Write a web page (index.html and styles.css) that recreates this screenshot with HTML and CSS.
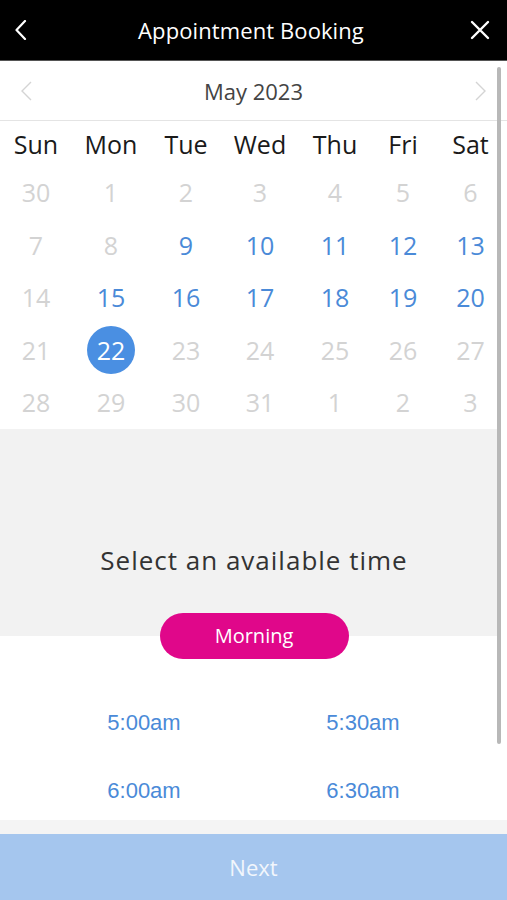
FILE: index.html
```html
<!DOCTYPE html>
<html>
<head>
<meta charset="utf-8">
<link rel="stylesheet" href="styles.css">
</head>
<body>
<div class="app">
  <header class="topbar">
    <svg class="icon" width="20" height="20" viewBox="0 0 20 20"><path d="M13 1 L4.5 10 L13 19" fill="none" stroke="#fff" stroke-width="2.2" stroke-linecap="round" stroke-linejoin="round"/></svg>
    <h1 class="title">Appointment Booking</h1>
    <svg class="icon" width="20" height="20" viewBox="0 0 20 20"><path d="M2 2 L18 18 M18 2 L2 18" fill="none" stroke="#fff" stroke-width="2.4" stroke-linecap="round"/></svg>
  </header>
  <main class="content">
    <div class="month">
      <svg width="14" height="22" viewBox="0 0 14 22"><path d="M12 2 L3 11 L12 20" fill="none" stroke="#d4d4d4" stroke-width="1.4"/></svg>
      <span class="month-name">May 2023</span>
      <svg width="14" height="22" viewBox="0 0 14 22"><path d="M2 2 L11 11 L2 20" fill="none" stroke="#d4d4d4" stroke-width="1.4"/></svg>
    </div>
    <div class="cal">
      <div class="dow">Sun</div><div class="dow">Mon</div><div class="dow">Tue</div><div class="dow">Wed</div><div class="dow">Thu</div><div class="dow">Fri</div><div class="dow">Sat</div>
      <div class="d off">30</div><div class="d off">1</div><div class="d off">2</div><div class="d off">3</div><div class="d off">4</div><div class="d off">5</div><div class="d off">6</div>
      <div class="d off">7</div><div class="d off">8</div><div class="d on">9</div><div class="d on">10</div><div class="d on">11</div><div class="d on">12</div><div class="d on">13</div>
      <div class="d off">14</div><div class="d on">15</div><div class="d on">16</div><div class="d on">17</div><div class="d on">18</div><div class="d on">19</div><div class="d on">20</div>
      <div class="d off">21</div><div class="d sel"><span class="dot">22</span></div><div class="d off">23</div><div class="d off">24</div><div class="d off">25</div><div class="d off">26</div><div class="d off">27</div>
      <div class="d off">28</div><div class="d off">29</div><div class="d off">30</div><div class="d off">31</div><div class="d off">1</div><div class="d off">2</div><div class="d off">3</div>
    </div>
    <section class="timepanel">
      <p class="prompt">Select an available time</p>
      <div class="pill">Morning</div>
    </section>
    <div class="times">
      <div class="t">5:00am</div><div class="t">5:30am</div>
      <div class="t">6:00am</div><div class="t">6:30am</div>
    </div>
    <div class="strip"></div>
    <div class="scrollbar"></div>
  </main>
  <footer class="next">Next</footer>
</div>
</body>
</html>
```
FILE: styles.css
```css
* { box-sizing: border-box; margin: 0; padding: 0; }
html, body { width: 507px; height: 900px; overflow: hidden; background: #fff; }
body { font-family: "Open Sans", "Noto Sans", sans-serif; }
.app { display: flex; flex-direction: column; height: 900px; }
.topbar {
  flex: 0 0 61px; background: #000; display: flex; align-items: center;
  justify-content: space-between; padding: 0 17px 0 12px;
  border-bottom: 1px solid #555;
}
.title { color: #fff; font-size: 22px; font-weight: 400; letter-spacing: 0.1px; }
.content { position: relative; flex: 0 0 772px; display: flex; flex-direction: column; }
.month {
  flex: 0 0 60px; display: flex; align-items: center; justify-content: space-between;
  padding: 0 19px 0 19px; border-bottom: 1px solid #e4e4e4;
}
.month-name { color: #444; font-size: 22px; }
.cal {
  flex: 0 0 auto;
  display: grid;
  grid-template-columns: 72px 78px 72px 76px 74px 62px 1fr;
  grid-template-rows: 45px repeat(5, 52.5px);
}
.dow, .d { display: flex; align-items: center; justify-content: center; font-size: 25px; }
.dow { color: #1a1a1a; }
.off { color: #d3d3d3; }
.on { color: #4a8ad8; }
.dot {
  width: 48px; height: 48px; border-radius: 50%; background: #4a8fe2; color: #fff;
  display: flex; align-items: center; justify-content: center;
}
.timepanel {
  flex: 0 0 207px;
  background: #f2f2f2; display: flex; flex-direction: column;
  align-items: center; justify-content: flex-end; margin-right: 6px; padding-left: 7px;
}
.prompt { color: #333; font-size: 26px; letter-spacing: 1px; margin-bottom: 35px; }
.pill {
  width: 189px; height: 46px; border-radius: 23px; background: #e0078a; color: #fff;
  font-size: 20px; display: flex; align-items: center; justify-content: center;
  margin-bottom: -23px; position: relative;
}
.times {
  flex: 0 0 184px; min-height: 0;
  display: grid; grid-template-columns: 219px 219px; justify-content: center;
  grid-template-rows: 68px 68px; padding-top: 53px;
}
.t {
  display: flex; align-items: center; justify-content: center;
  font-family: "Liberation Sans", Arial, sans-serif; font-size: 22px; color: #4a8ad8;
}
.strip { flex: 0 0 14px; background: #f4f4f4; }
.scrollbar {
  position: absolute; left: 497px; top: 6px; width: 4px; height: 677px;
  background: #b8b8b8; border-radius: 2px;
}
.next {
  flex: 0 0 67px; background: #a5c6ee; color: #f2f6fc; font-size: 22px;
  display: flex; align-items: center; justify-content: center;
}
```
